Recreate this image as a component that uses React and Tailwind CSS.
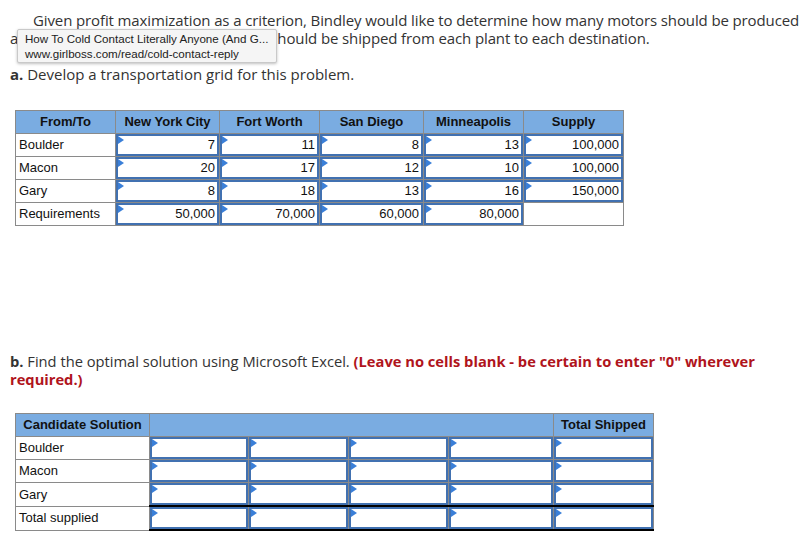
import React from "react"

const costs = [
  { from: "Boulder", vals: ["7", "11", "8", "13"], supply: "100,000" },
  { from: "Macon", vals: ["20", "17", "12", "10"], supply: "100,000" },
  { from: "Gary", vals: ["8", "18", "13", "16"], supply: "150,000" },
]

const destinations = ["New York City", "Fort Worth", "San Diego", "Minneapolis"]

function InputCell({ value, last }) {
  return (
    <td
      className={
        "p-0 h-[23px] border border-[#8a8a8a] " +
        (last ? "border-y-2 border-y-black" : "")
      }>
      <div className="relative h-[22px] border-2 border-[#4171b1] bg-white text-right pr-[2px] leading-[18px]">
        <span className="absolute top-0 left-0 w-0 h-0 border-y-[4px] border-y-transparent border-l-[6px] border-l-[#3a7fd8]" />
        {value}
      </div>
    </td>
  )
}

function Label({ children }) {
  return (
    <td className="border border-[#8a8a8a] px-[3px] h-[23px] text-left">
      {children}
    </td>
  )
}

export default function App() {
  return (
    <div className="relative w-[808px] h-[545px] bg-white overflow-hidden px-[10px] text-[#333] font-['Open_Sans',sans-serif]">
      {/* problem statement */}
      <p className="pt-[11px] text-[15px] leading-[18px] whitespace-nowrap tracking-[-0.12px]">
        <span className="pl-[23px]">
          Given profit maximization as a criterion, Bindley would like to
          determine how many motors should be produced
        </span>
        <br />
        <span className="tracking-[0.12px]">at each plant and how many motors s</span>
        hould be shipped from each plant to each destination.
      </p>

      {/* link tooltip */}
      <div className="absolute left-[17px] top-[29px] w-[260px] h-[34px] bg-[#f5f5f5] border border-[#c9c9c9] rounded-[2px] shadow-[0_1px_3px_rgba(0,0,0,0.25)] px-[7px] pt-[1px] text-[11.6px] leading-[15px] text-[#222] font-['Liberation_Sans',sans-serif] whitespace-nowrap">
        <div>How To Cold Contact Literally Anyone (And G...</div>
        <div>www.girlboss.com/read/cold-contact-reply</div>
      </div>

      <p className="mt-[18px] text-[15px] leading-[18px]">
        <b>a.</b> Develop a transportation grid for this problem.
      </p>

      {/* transportation grid */}
      <table className="mt-[27px] ml-[5px] table-fixed border-collapse text-[13px] text-[#111] font-['Liberation_Sans',Arial,sans-serif]">
        <thead>
          <tr className="bg-[#7aace1] h-[23px]">
            <th className="w-[100px] border border-[#8a8a8a] font-bold">From/To</th>
            {destinations.map((d, i) => (
              <th
                key={d}
                className={
                  "border border-[#8a8a8a] font-bold " +
                  (i % 2 === 0 ? "w-[104px]" : "w-[100px]")
                }>
                {d}
              </th>
            ))}
            <th className="w-[100px] border border-[#8a8a8a] font-bold">Supply</th>
          </tr>
        </thead>
        <tbody>
          {costs.map((r) => (
            <tr key={r.from}>
              <Label>{r.from}</Label>
              {r.vals.map((v, i) => (
                <InputCell key={i} value={v} />
              ))}
              <InputCell value={r.supply} />
            </tr>
          ))}
          <tr>
            <Label>Requirements</Label>
            <InputCell value="50,000" />
            <InputCell value="70,000" />
            <InputCell value="60,000" />
            <InputCell value="80,000" />
            <td className="border border-[#8a8a8a]" />
          </tr>
        </tbody>
      </table>

      <p className="mt-[126px] text-[14.7px] leading-[18px] text-[#333]">
        <b>b.</b> Find the optimal solution using Microsoft Excel.{" "}
        <span className="font-bold text-[#b0141c]">
          (Leave no cells blank - be certain to enter "0" wherever
          <br />
          required.)
        </span>
      </p>

      {/* candidate solution */}
      <table className="mt-[25px] ml-[5px] w-[639px] table-fixed border-collapse text-[13px] text-[#111] font-['Liberation_Sans',Arial,sans-serif]">
        <colgroup>
          <col className="w-[134px]" />
          <col className="w-[99px]" />
          <col className="w-[100px]" />
          <col className="w-[100px]" />
          <col className="w-[105px]" />
          <col className="w-[100px]" />
        </colgroup>
        <thead>
          <tr className="bg-[#7aace1] h-[23px]">
            <th className="border border-[#8a8a8a] font-bold">
              Candidate Solution
            </th>
            <th colSpan={4} className="border border-[#8a8a8a]" />
            <th className="border border-[#8a8a8a] font-bold">
              Total Shipped
            </th>
          </tr>
        </thead>
        <tbody>
          {["Boulder", "Macon", "Gary", "Total supplied"].map((name, r) => (
            <tr key={name}>
              <Label>{name}</Label>
              {[0, 1, 2, 3, 4].map((c) => (
                <InputCell key={c} value="" last={r === 3} />
              ))}
            </tr>
          ))}
        </tbody>
      </table>
    </div>
  )
}
